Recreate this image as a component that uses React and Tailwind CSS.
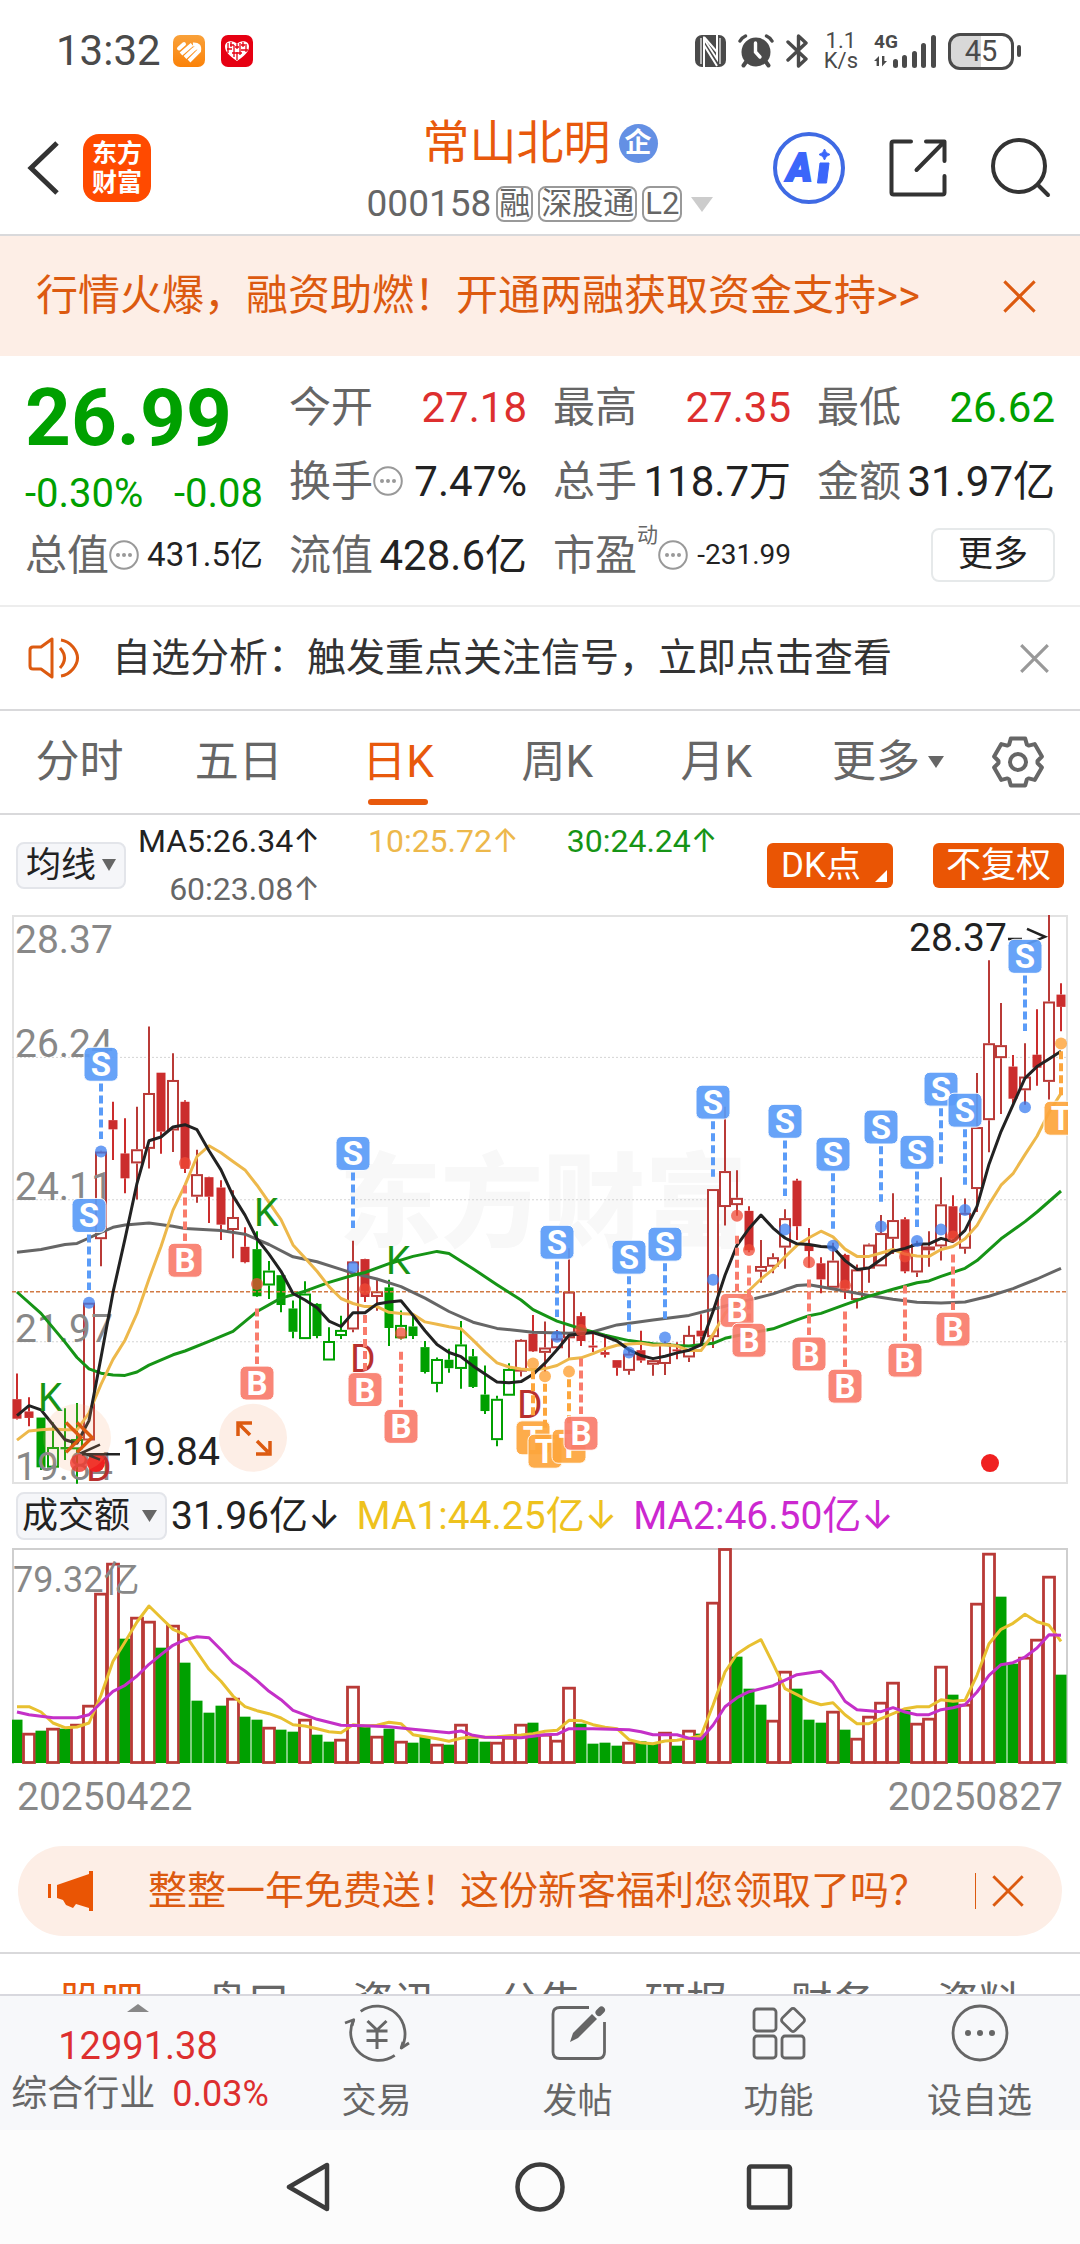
import React, { useState } from 'react'

const BLUE = '#5b9cf8'
const CORAL = '#f97c6c'
const AMBER = '#fda63c'
const RED = '#cb2d2d'
const HOLLOW = '#b93a37'
const GREEN = '#00a000'

// high, body top, body bottom, low, kind (r / g filled, R / G hollow)
// levels run from 44 (28.37) down to 1528 (19.84)
const CANDLES = [
    [1242, 1309, 1360, 1362, 'r'], [1304, 1341, 1358, 1380, 'r'], [1357, 1357, 1487, 1494, 'g'], [1370, 1434, 1488, 1490, 'G'],
    [1333, 1434, 1440, 1468, 'g'], [1319, 1413, 1440, 1530, 'G'], [1057, 1057, 1417, 1417, 'R'], [660, 662, 891, 962, 'R'],
    [532, 580, 604, 684, 'r'], [575, 667, 732, 771, 'r'], [545, 656, 693, 787, 'R'], [335, 509, 655, 706, 'R'],
    [456, 456, 610, 668, 'r'], [405, 475, 607, 663, 'R'], [528, 532, 707, 718, 'r'], [657, 721, 780, 796, 'R'],
    [728, 729, 780, 849, 'r'], [737, 756, 853, 893, 'r'], [763, 833, 867, 941, 'R'], [860, 911, 951, 954, 'r'],
    [870, 917, 1040, 1042, 'g'], [948, 973, 1012, 1047, 'G'], [985, 985, 1063, 1082, 'g'], [1051, 1072, 1133, 1150, 'g'],
    [1001, 1033, 1152, 1152, 'G'], [1058, 1060, 1144, 1150, 'g'], [1121, 1157, 1208, 1208, 'G'], [1091, 1128, 1144, 1152, 'G'],
    [895, 949, 1127, 1134, 'R'], [942, 943, 1042, 1055, 'r'], [996, 1027, 1042, 1078, 'R'], [997, 1017, 1123, 1170, 'g'],
    [1077, 1115, 1150, 1153, 'G'], [1090, 1119, 1144, 1152, 'g'], [1157, 1173, 1238, 1242, 'g'], [1200, 1204, 1269, 1291, 'G'],
    [1177, 1206, 1228, 1240, 'g'], [1105, 1166, 1230, 1282, 'G'], [1178, 1197, 1277, 1280, 'g'], [1221, 1297, 1340, 1348, 'g'],
    [1300, 1308, 1416, 1432, 'G'], [1215, 1230, 1300, 1300, 'G'], [1152, 1154, 1237, 1250, 'R'], [1089, 1138, 1184, 1186, 'r'],
    [1106, 1174, 1188, 1237, 'R'], [1128, 1150, 1176, 1180, 'R'], [915, 1028, 1150, 1205, 'R'], [1082, 1092, 1157, 1170, 'r'],
    [1138, 1169, 1174, 1186, 'r'], [1144, 1186, 1193, 1200, 'r'], [1207, 1207, 1227, 1248, 'r'], [1180, 1190, 1235, 1245, 'R'],
    [1130, 1181, 1208, 1214, 'r'], [1200, 1207, 1219, 1248, 'R'], [1158, 1162, 1217, 1246, 'R'], [1160, 1179, 1184, 1205, 'r'],
    [1117, 1141, 1200, 1212, 'R'], [1087, 1130, 1145, 1170, 'r'], [760, 760, 1147, 1175, 'R'], [545, 713, 807, 855, 'R'],
    [711, 783, 802, 830, 'R'], [805, 817, 920, 925, 'r'], [893, 961, 976, 1005, 'R'], [928, 938, 963, 980, 'R'],
    [813, 836, 913, 968, 'R'], [733, 738, 857, 893, 'r'], [862, 905, 922, 965, 'r'], [938, 954, 996, 1032, 'r'],
    [900, 947, 1018, 1018, 'R'], [929, 932, 1020, 1047, 'r'], [957, 970, 1050, 1072, 'R'], [902, 905, 968, 1005, 'R'],
    [828, 875, 962, 962, 'R'], [771, 841, 890, 930, 'R'], [834, 839, 975, 980, 'r'], [895, 903, 978, 990, 'R'],
    [870, 910, 920, 963, 'R'], [729, 800, 910, 947, 'R'], [776, 805, 890, 895, 'r'], [785, 822, 916, 929, 'R'],
    [457, 598, 760, 820, 'R'], [162, 379, 580, 664, 'R'], [274, 384, 418, 564, 'R'], [410, 440, 524, 535, 'r'],
    [379, 466, 502, 540, 'R'], [290, 409, 443, 490, 'r'], [44, 270, 480, 526, 'R'], [222, 252, 284, 348, 'r'],
]

const dense = (list) => list.map((v, i) => [i, v])

const MA5 = dense([
    1352, 1326, 1337, 1376, 1415, 1424, 1365, 1200, 1030, 890, 745, 634, 624, 598, 592, 605, 660, 710, 778, 828, 890, 930,
    975, 1033, 1050, 1070, 1105, 1119, 1083, 1083, 1060, 1055, 1052, 1090, 1130, 1166, 1187, 1198, 1222, 1243, 1264, 1266,
    1263, 1244, 1215, 1180, 1142, 1138, 1135, 1145, 1157, 1180, 1195, 1203, 1197, 1188, 1181, 1167, 1080, 985, 907, 863,
    828, 862, 888, 903, 905, 910, 912, 947, 970, 966, 944, 922, 915, 904, 903, 889, 897, 868, 805, 695, 610, 540, 470, 440,
    420, 400,
])
const MA10 = dense([
    1416, 1392, 1389, 1387, 1389, 1389, 1345, 1270, 1205, 1155, 1085, 995, 910, 815, 750, 675, 647, 665, 688, 710, 750, 795,
    840, 906, 940, 975, 1015, 1046, 1059, 1067, 1067, 1082, 1085, 1087, 1107, 1113, 1120, 1125, 1155, 1186, 1214, 1225, 1230,
    1233, 1229, 1221, 1204, 1201, 1190, 1177, 1168, 1165, 1163, 1168, 1167, 1170, 1182, 1182, 1140, 1085, 1053, 1025, 995,
    970, 937, 907, 887, 870, 885, 917, 936, 936, 927, 918, 930, 935, 936, 918, 910, 890, 855, 800, 750, 720, 670, 622, 560, 510,
])
const MA30 = [
    [0, 1029], [2, 1085], [4, 1160], [5, 1200], [6, 1230], [7, 1241], [8, 1246], [9, 1247], [10, 1238], [11, 1220], [13, 1193],
    [14, 1183], [16, 1158], [18, 1132], [20, 1080], [22, 1045], [24, 1027], [26, 1004], [28, 985], [29, 978], [31, 955],
    [33, 936], [35, 923], [36, 928], [38, 968], [40, 1010], [42, 1050], [43, 1075], [45, 1105], [47, 1125], [49, 1142],
    [51, 1156], [53, 1164], [55, 1169], [56, 1170], [58, 1163], [59, 1150], [61, 1137], [63, 1125], [65, 1102], [66, 1091],
    [67, 1085], [69, 1062], [71, 1040], [73, 1022], [75, 1005], [76, 1000], [77, 988], [79, 967], [80, 947], [82, 890],
    [84, 845], [85, 820], [87, 765],
]
const MA60 = [
    [0, 925], [2, 918], [4, 905], [5, 902], [6, 888], [7, 873], [8, 860], [9, 854], [11, 849], [13, 857], [14, 863], [17, 868],
    [19, 878], [21, 905], [23, 937], [25, 950], [27, 970], [28, 980], [30, 995], [32, 1015], [34, 1045], [36, 1080],
    [38, 1108], [40, 1124], [43, 1134], [46, 1137], [48, 1133], [50, 1115], [53, 1102], [56, 1090], [58, 1074], [61, 1050],
    [63, 1034], [65, 1012], [66, 1010], [69, 1026], [71, 1038], [73, 1048], [75, 1056], [77, 1058], [79, 1055], [81, 1040],
    [83, 1020], [85, 995], [87, 967],
]

// signal letter, day, badge level, dot level
const SIGNALS = [
    ['S', 6, 829, 1057], ['S', 7, 434, 662], ['B', 14, 946, 692], ['B', 20, 1267, 1008], ['S', 28, 667, 964],
    ['B', 29, 1284, 1022], ['B', 32, 1380, 1137], ['S', 45, 899, 1146], ['T', 43, 1410, 1216], ['T', 44, 1445, 1249],
    ['T', 46, 1432, 1237], ['B', 47, 1398, 1128], ['S', 51, 938, 1187], ['S', 54, 904, 1148], ['S', 58, 533, 997],
    ['B', 60, 1077, 830], ['B', 61, 1155, 919], ['S', 64, 583, 866], ['B', 66, 1191, 951], ['S', 68, 669, 908],
    ['B', 69, 1275, 1012], ['S', 72, 598, 858], ['B', 74, 1207, 936], ['S', 75, 664, 896], ['S', 77, 499, 866],
    ['B', 78, 1126, 884], ['S', 79, 554, 815], ['S', 84, 152, 546], ['T', 87, 575, 380],
]

// bar tops, 208 is 79.32亿 and 850 is zero
const VOLUME = [
    [723, 'g'], [762, 'r'], [756, 'g'], [747, 'r'], [750, 'g'], [735, 'r'], [678, 'r'], [342, 'r'], [252, 'r'], [480, 'g'],
    [414, 'r'], [426, 'r'], [507, 'g'], [438, 'r'], [552, 'g'], [666, 'g'], [702, 'g'], [681, 'g'], [657, 'r'], [714, 'g'],
    [723, 'g'], [744, 'r'], [753, 'g'], [759, 'g'], [720, 'r'], [768, 'g'], [789, 'g'], [780, 'r'], [621, 'r'], [741, 'g'],
    [771, 'r'], [750, 'g'], [786, 'r'], [792, 'g'], [774, 'g'], [795, 'r'], [798, 'g'], [735, 'r'], [780, 'g'], [789, 'g'],
    [789, 'r'], [774, 'r'], [735, 'r'], [732, 'g'], [765, 'r'], [783, 'r'], [624, 'r'], [735, 'g'], [795, 'g'], [792, 'g'],
    [801, 'g'], [789, 'r'], [788, 'g'], [795, 'g'], [759, 'r'], [801, 'g'], [753, 'r'], [765, 'g'], [369, 'r'], [208, 'r'],
    [534, 'g'], [630, 'g'], [678, 'g'], [723, 'r'], [576, 'r'], [630, 'g'], [723, 'g'], [732, 'g'], [696, 'r'], [753, 'g'],
    [777, 'r'], [711, 'r'], [669, 'r'], [609, 'r'], [694, 'g'], [732, 'r'], [717, 'r'], [561, 'r'], [648, 'g'], [675, 'r'],
    [372, 'r'], [222, 'r'], [354, 'g'], [555, 'g'], [534, 'r'], [480, 'r'], [291, 'r'], [588, 'g'],
]
const VMA1 = dense([
    684, 684, 700, 733, 747, 745, 733, 650, 548, 490, 430, 382, 417, 452, 468, 520, 572, 608, 652, 684, 696, 705, 718, 738,
    742, 750, 759, 762, 738, 742, 740, 731, 735, 768, 774, 780, 788, 779, 774, 776, 774, 771, 769, 765, 758, 755, 725, 726,
    738, 746, 750, 783, 792, 795, 787, 785, 779, 771, 680, 580, 526, 502, 483, 555, 630, 648, 667, 678, 672, 708, 735, 735,
    720, 705, 690, 684, 684, 663, 668, 665, 590, 495, 452, 434, 407, 429, 440, 488,
])
const VMA2 = [
    [0, 700], [1, 708], [3, 717], [5, 717], [6, 708], [7, 672], [8, 638], [9, 620], [10, 592], [11, 557], [12, 528], [13, 500],
    [14, 483], [15, 474], [16, 477], [17, 513], [18, 552], [19, 577], [20, 606], [21, 638], [22, 663], [23, 695], [25, 722],
    [27, 740], [29, 741], [31, 744], [33, 752], [36, 762], [37, 757], [38, 770], [39, 776], [42, 777], [44, 768], [45, 767],
    [46, 750], [48, 750], [51, 753], [52, 759], [53, 768], [55, 768], [56, 779], [57, 781], [58, 740], [59, 684], [60, 657],
    [61, 639], [63, 621], [65, 588], [67, 578], [68, 612], [69, 668], [70, 693], [72, 699], [73, 687], [74, 700], [75, 708],
    [76, 708], [77, 693], [78, 687], [79, 678], [80, 640], [81, 590], [82, 558], [83, 552], [84, 535], [85, 508], [86, 468],
    [87, 470],
]

const cx = (i) => 5 + i * 12
const py = (v) => ((v - 44) * 568) / 1484
const vy = (v) => (v - 208) / 3
const points = (list, y) => list.map(([i, v]) => `${cx(i)},${y(v).toFixed(1)}`).join(' ')

const Cross = ({ className, width = 2 }) => (
    <svg viewBox="0 0 24 24" className={className} fill="none" stroke="currentColor" strokeWidth={width}>
        <path d="M1 1 23 23M23 1 1 23" />
    </svg>
)

const Caret = ({ className }) => (
    <svg viewBox="0 0 12 10" preserveAspectRatio="none" className={className} fill="currentColor">
        <path d="M0 0H12L6 10Z" />
    </svg>
)

const MoreDots = () => (
    <svg viewBox="0 0 30 30" className="size-[30px] shrink-0 text-[#999]">
        <circle cx="15" cy="15" r="13.8" fill="none" stroke="currentColor" strokeWidth="2" />
        <circle cx="9" cy="15" r="2" fill="currentColor" />
        <circle cx="15" cy="15" r="2" fill="currentColor" />
        <circle cx="21" cy="15" r="2" fill="currentColor" />
    </svg>
)

const StatusBar = () => (
    <div className="flex h-[102px] items-center pl-[56px] pr-[59px] text-[#4a4a4a]">
        <span className="text-[42px] leading-none">13:32</span>
        <svg viewBox="0 0 32 32" className="ml-3 size-8">
            <defs>
                <linearGradient id="heartApp" x1="0" y1="0" x2="0" y2="1">
                    <stop offset="0" stopColor="#f9a13a" />
                    <stop offset="1" stopColor="#fb8208" />
                </linearGradient>
            </defs>
            <rect width="32" height="32" rx="7" fill="url(#heartApp)" />
            <g fill="none" stroke="#fff" strokeWidth="4">
                <path d="M6 13.500 11 9" strokeLinecap="round" />
                <path d="M8 19 19 9.500" />
                <path d="M12 22.500 20 15 24 12" />
                <path d="M16 26 26 16Q27.500 9 20 9.500" />
            </g>
        </svg>
        <svg viewBox="0 0 32 32" className="ml-4 size-8">
            <rect width="32" height="32" rx="7" fill="#e60012" />
            <path d="M16 26C9 21 4 17 4 11.500 4 6 12 4.500 16 9 20 4.500 28 6 28 11.500 28 17 23 21 16 26Z" fill="#fff" />
            <path d="M7 8V18M10 7V12M13 10V22M16 9V14M19 8V20M22 7V12M25 9V17M6 14H11M11 18H21M14 12H18M20 15H27M9 10H13M16 17V25M20 10H24" stroke="#e60012" strokeWidth="1.300" />
        </svg>
        <div className="ml-auto flex items-center gap-3">
            <svg viewBox="0 0 31 32" className="h-8 w-[31px]">
                <rect width="31" height="32" rx="7" fill="currentColor" />
                <path d="M9 32V4L22 24V0" fill="none" stroke="#fff" strokeWidth="2" />
                <path d="M9 10 22 31M9 2 22 17" fill="none" stroke="#fff" strokeWidth="2" />
                <path d="M6 3V29M25 3V29" stroke="#fff" strokeWidth="1.200" />
            </svg>
            <svg viewBox="0 0 36 34" className="h-[34px] w-9" fill="none" stroke="currentColor" strokeLinecap="round">
                <circle cx="18" cy="18" r="14.500" fill="currentColor" stroke="none" />
                <path d="M2 7Q4 3.500 7.500 2M34 7Q32 3.500 28.500 2" strokeWidth="3.400" />
                <path d="M8 28 5.500 31.500M28 28 30.500 31.500" strokeWidth="4" />
                <path d="M17.500 9V18L22 23" stroke="#fff" strokeWidth="3.400" />
            </svg>
            <svg viewBox="0 0 22 34" className="h-[34px] w-[22px]" fill="none" stroke="currentColor" strokeWidth="3.400" strokeLinejoin="round" strokeLinecap="round">
                <path d="M2 8 20 25 12.500 32V2L20 9 2 26" />
            </svg>
            <span className="px-1 text-center text-[22px] leading-[20px]">1.1<br />K/s</span>
            <div className="relative w-[62px]">
                <span className="absolute left-0 -top-px text-[19px] font-bold leading-none">4G</span>
                <svg viewBox="0 0 62 36" className="h-9 w-full" fill="currentColor">
                    <path d="M0 28 5 23V33H2.600V28ZM13 28 8 33.500V23H10.400V28Z" />
                    <rect x="19" y="26" width="5" height="9" rx="2.500" />
                    <rect x="28" y="22" width="5" height="13" rx="2.500" />
                    <rect x="38" y="18" width="5" height="17" rx="2.500" />
                    <rect x="47" y="10" width="5" height="25" rx="2.500" />
                    <rect x="57" y="2" width="5" height="33" rx="2.500" />
                </svg>
            </div>
            <div className="flex items-center gap-[3px]">
                <span className="flex h-[37px] w-[66px] items-center justify-center rounded-xl border-[3px] border-[#4a4a4a] bg-linear-to-r from-[#d8d8d8] from-50% to-white to-50% text-[29px] leading-none">45</span>
                <i className="h-3 w-1 rounded-full bg-[#4a4a4a]" />
            </div>
        </div>
    </div>
)

const Tag = ({ children }) => (
    <span className="rounded-lg border-2 border-[#999] px-px text-[31px] leading-[32px]">{children}</span>
)

const Header = () => (
    <header className="grid grid-cols-[1fr_auto_1fr] items-center border-b-2 border-[#d9d9db] px-[27px]">
        <div className="flex items-center gap-6">
            <button aria-label="返回">
                <svg viewBox="0 0 32 54" className="h-[54px] w-8" fill="none" stroke="#333" strokeWidth="5">
                    <path d="M30 2 4 27 30 52" />
                </svg>
            </button>
            <a href="#home" className="grid size-[68px] place-content-center rounded-2xl bg-[#ff4a00] text-center text-[25px] font-bold leading-[29px] text-white">
                东方<br />财富
            </a>
        </div>
        <div className="flex flex-col items-center">
            <h1 className="flex items-center gap-2 text-[47px] leading-[82px] text-[#e8590c]">
                常山北明
                <span className="grid size-[39px] place-content-center rounded-full bg-[#6490e4] text-[27px] font-bold leading-none text-white">企</span>
            </h1>
            <button className="flex items-center gap-[5px] pb-[10px] text-[37px] leading-[40px] text-[#666]">
                000158
                <Tag>融</Tag>
                <Tag>深股通</Tag>
                <Tag>L2</Tag>
                <Caret className="ml-1 h-[15px] w-[22px] text-[#ccc]" />
            </button>
        </div>
        <div className="flex items-center justify-end gap-11 pr-[2px]">
            <button aria-label="AI">
                <svg viewBox="0 0 72 72" className="size-[72px]">
                    <circle cx="36" cy="36" r="34" fill="none" stroke="#3f6ae4" strokeWidth="4" />
                    <text x="14" y="49" fontSize="38" fontWeight="900" fontStyle="italic" fill="#3b66fa" stroke="#3b66fa" strokeWidth="2">A</text>
                    <path d="M47 31H56L53.500 51H44.500Z" fill="#3b66fa" stroke="#3b66fa" strokeLinejoin="round" />
                    <path d="M51.500 17Q52.500 21.500 57 22.500 52.500 23.500 51.500 28 50.500 23.500 46 22.500 50.500 21.500 51.500 17Z" fill="#3b66fa" stroke="#3b66fa" />
                </svg>
            </button>
            <button aria-label="分享">
                <svg viewBox="0 0 58 58" className="size-[58px]" fill="none" stroke="#333" strokeWidth="4" strokeLinecap="round" strokeLinejoin="round">
                    <path d="M22 2.500H4.500Q2.500 2.500 2.500 4.500V53.500Q2.500 55.500 4.500 55.500H53.500Q55.500 55.500 55.500 53.500V37" />
                    <path d="M37 2.500H55.500V22M55 3 27.500 31" />
                </svg>
            </button>
            <button aria-label="搜索">
                <svg viewBox="0 0 60 60" className="size-[60px]" fill="none" stroke="#333" strokeWidth="4" strokeLinecap="round">
                    <circle cx="28" cy="28" r="26" />
                    <path d="M47 47 57 57" />
                </svg>
            </button>
        </div>
    </header>
)

const Field = ({ label, value, tone = 'text-[#222]', size = 'text-[42px]', more, sup }) => (
    <div className="flex items-center whitespace-nowrap">
        <span className="text-[42px] text-[#666]">{label}</span>
        {sup && <sup className="-top-5 text-[21px] text-[#666]">{sup}</sup>}
        {more && <MoreDots />}
        <span className={`ml-auto ${tone} ${size}`}>{value}</span>
    </div>
)

const Quote = () => (
    <section className="grid auto-rows-[74px] grid-cols-4 gap-x-[26px] border-b-2 border-[#ededed] px-[25px] pb-[13px] pt-[14px]">
        <div className="row-span-2 flex flex-col justify-center pt-3 text-[#00a000]">
            <strong className="text-[80px] font-bold leading-[80px]">26.99</strong>
            <div className="flex justify-between pt-2 text-[40px] leading-[56px]">
                <span>-0.30%</span>
                <span>-0.08</span>
            </div>
        </div>
        <Field label="今开" value="27.18" tone="text-[#dd2f2f]" />
        <Field label="最高" value="27.35" tone="text-[#dd2f2f]" />
        <Field label="最低" value="26.62" tone="text-[#00a000]" />
        <Field label="换手" value="7.47%" more />
        <Field label="总手" value="118.7万" />
        <Field label="金额" value="31.97亿" />
        <Field label="总值" value="431.5亿" size="text-[33px]" more />
        <Field label="流值" value="428.6亿" />
        <Field label="市盈" value="-231.99" size="text-[28px]" sup="动" more />
        <button className="self-center justify-self-end rounded-lg border-2 border-[#e6e9ea] px-[25px] text-[35px] leading-[50px] text-[#222]">更多</button>
    </section>
)

const Notice = () => (
    <section className="flex items-center border-b-2 border-[#d9d9db] px-7 text-[39px] leading-[102px] text-[#333]">
        <svg viewBox="0 0 52 42" className="mr-8 h-[42px] w-[52px]" fill="none" stroke="#dc5a10" strokeWidth="3" strokeLinejoin="round">
            <path d="M24 2V40L13 32H5Q2 32 2 29V13Q2 10 5 10H13Z" />
            <path d="M32 11Q41 21 32 31M33 3Q40 4 45 10 54 21 45 32 40 38 33 39" />
        </svg>
        <a href="#analysis">自选分析：触发重点关注信号，立即点击查看</a>
        <button aria-label="关闭提示" className="ml-auto mr-[3px]"><Cross className="size-[29px] text-[#999]" width={2.6} /></button>
    </section>
)

const gearPath = () => {
    const pts = []
    for (let k = 0; k < 6; k++) {
        for (const [d, r] of [[-27, 19.5], [-17, 24.5], [17, 24.5], [27, 19.5]]) {
            const a = ((k * 60 - 90 + d) * Math.PI) / 180
            pts.push(`${(27 + r * Math.cos(a)).toFixed(1)} ${(27 + r * Math.sin(a)).toFixed(1)}`)
        }
    }
    return `M${pts.join('L')}Z`
}

const PERIODS = ['分时', '五日', '日K', '周K', '月K']

const Periods = () => {
    const [active, setActive] = useState('日K')
    return (
        <nav className="grid grid-cols-[repeat(5,1fr)_182px_80px] border-b-2 border-[#d9d9db] pr-[22px] text-[44px] leading-[102px] text-[#666]">
            {PERIODS.map((p) => (
                <button key={p} onClick={() => setActive(p)} className={`relative ${p === active ? 'text-[#e8590c]' : ''}`}>
                    {p}
                    {p === active && <i className="absolute bottom-2 left-1/2 h-[6px] w-[60px] -translate-x-1/2 rounded-full bg-[#e8590c]" />}
                </button>
            ))}
            <button className="flex items-center justify-center gap-2 pl-[2px]">
                更多
                <Caret className="h-3 w-4" />
            </button>
            <button aria-label="设置" className="grid place-content-center">
                <svg viewBox="0 0 54 54" className="size-[54px]" fill="none" stroke="currentColor" strokeWidth="4" strokeLinejoin="round">
                    <path d={gearPath()} />
                    <circle cx="27" cy="27" r="8" />
                </svg>
            </button>
        </nav>
    )
}

const Averages = () => (
    <div className="flex items-center px-4 text-[32px]">
        <button className="flex items-center gap-[6px] rounded-lg border-2 border-[#e3e5ea] bg-[#f5f6f9] px-2 text-[35px] leading-[43px] text-[#222]">
            均线
            <Caret className="h-3 w-[14px] text-[#666]" />
        </button>
        <div className="mr-auto grid grid-cols-[auto_auto_auto] justify-items-end gap-x-12 py-[2px] pl-3 leading-[48px]">
            <span className="text-[#222]">MA5:26.34↑</span>
            <span className="text-[#edb84b]">10:25.72↑</span>
            <span className="text-[#169416]">30:24.24↑</span>
            <span className="text-[#666]">60:23.08↑</span>
        </div>
        <button className="relative rounded-md bg-[#ea5504] pl-[14px] pr-8 text-[35px] leading-[45px] text-white">
            DK点
            <i className="absolute bottom-[6px] right-[6px] border-b-[12px] border-l-[12px] border-b-white border-l-transparent" />
        </button>
        <button className="ml-10 rounded-md bg-[#ea5504] px-[13px] text-[35px] leading-[45px] text-white">不复权</button>
    </div>
)

const Candle = ({ i, data }) => {
    const [high, top, bottom, low, kind] = data
    const hollow = kind === 'R' || kind === 'G'
    const green = kind === 'g' || kind === 'G'
    const color = green ? GREEN : hollow ? HOLLOW : RED
    return (
        <g stroke={color} strokeWidth="2">
            <path d={`M${cx(i)} ${py(high)}V${py(top)}M${cx(i)} ${py(bottom)}V${py(low)}`} />
            {hollow ? (
                <rect x={cx(i) - 5} y={py(top) + 1} width="10" height={Math.max(py(bottom) - py(top) - 2, 1)} fill="#fff" />
            ) : (
                <rect x={cx(i) - 4.5} y={py(top)} width="9" height={py(bottom) - py(top)} fill={color} stroke="none" />
            )}
        </g>
    )
}

const Signal = ({ data }) => {
    const [letter, i, at, dot] = data
    const color = { S: BLUE, B: CORAL, T: AMBER }[letter]
    const line = { S: [at + 50, at + 195], B: [at - 195, at - 50], T: [dot + 20, at - 50] }[letter]
    const dotColor = { S: '#3b7df0', B: '#f04a35', T: '#fd9b28' }[letter]
    return (
        <g>
            <path d={`M${cx(i)} ${py(line[0])}V${py(line[1])}`} stroke={color} strokeWidth="4" strokeDasharray="8 4" />
            <circle cx={cx(i)} cy={py(dot)} r="6" fill={dotColor} opacity="0.75" />
            <rect x={cx(i) - 17} y={py(at) - 17} width="34" height="34" rx="6" fill={color} opacity="0.92" stroke="#fff" strokeWidth="1" />
            <text x={cx(i)} y={py(at) + 12} textAnchor="middle" fontSize="33" fontWeight="700" fill="#fff">{letter}</text>
        </g>
    )
}

const PriceChart = () => (
    <svg viewBox="0 0 1056 569" className="block w-full overflow-hidden" role="img" aria-label="日K线">
        <text x="327" y="324" fontSize="102" fontWeight="900" fill="#f8f8f8">东方财富</text>
        <rect x="1" y="1" width="1054" height="567" fill="none" stroke="#e2e2e2" strokeWidth="2" />
        {[416, 788, 1159].map((v) => (
            <path key={v} d={`M0 ${py(v)}H1056`} stroke="#d4d4d4" strokeDasharray="2 2" />
        ))}
        {CANDLES.map((c, i) => <Candle key={i} i={i} data={c} />)}
        <path d={`M0 ${py(1028)}H1056`} stroke="#d27a45" strokeWidth="1.500" strokeDasharray="4 2" />
        <g fontSize="39" fill="#888">
            <text x="3" y={py(144)}>28.37</text>
            <text x="3" y={py(414)}>26.24</text>
            <text x="3" y={py(788)}>24.11</text>
            <text x="3" y={py(1159)}>21.97</text>
            <text x="3" y={py(1521)}>19.84</text>
        </g>
        <g fill="none" strokeWidth="3" strokeLinejoin="round">
            <polyline points={points(MA60, py)} stroke="#666" />
            <polyline points={points(MA30, py)} stroke="#169416" />
            <polyline points={points(MA10, py)} stroke="#edb84b" />
            <polyline points={points(MA5, py)} stroke="#222" />
        </g>
        <g fontSize="39" fill="#169416">
            <text x="26" y={py(1340)}>K</text>
            <text x="242" y={py(857)}>K</text>
            <text x="374" y={py(982)}>K</text>
        </g>
        <g fontSize="39" fill="#b8302e">
            <text x="74" y={py(1522)}>D</text>
            <text x="338" y={py(1237)}>D</text>
            <text x="505" y={py(1357)}>D</text>
        </g>
        <circle cx="67" cy={py(1476)} r="9" fill="#f02020" opacity="0.8" />
        <circle cx="84" cy={py(1476)} r="9" fill="#f02020" />
        <circle cx="978" cy={py(1476)} r="9" fill="#f02020" />
        <g fontSize="39" fill="#222">
            <text x="110" y={py(1482)}>19.84</text>
            <text x="897" y={py(137)}>28.37</text>
        </g>
        <path d={`M108 ${py(1453)}H70M88 ${py(1428)}L70 ${py(1449)} 88 ${py(1467)}`} fill="none" stroke="#222" strokeWidth="2.500" />
        <path d={`M996 ${py(107)}H1010M1015 ${py(80)}L1033 ${py(101)} 1015 ${py(120)}`} fill="none" stroke="#222" strokeWidth="2.500" />
        {SIGNALS.map((s, k) => <Signal key={k} data={s} />)}
        <circle cx="65" cy={py(1410)} r="34" fill="#f9a56f" opacity="0.17" />
        <circle cx="241" cy={py(1410)} r="34" fill="#fdeee6" />
        <g fill="none" stroke="#dc5a10" strokeWidth="3.500">
            <path d={`M54 ${py(1370)}L69 ${py(1409)} 54 ${py(1448)}M65 ${py(1370)}L80 ${py(1409)} 65 ${py(1448)}`} />
            <path d="M226 521V508H240M228 510 238 520M258 526V539H244M256 537 245 526" />
        </g>
    </svg>
)

const VolumeChart = () => (
    <svg viewBox="0 0 1056 216" className="block w-full" role="img" aria-label="成交额">
        <path d="M1 216V1H1055V216" fill="none" stroke="#cfcfcf" strokeWidth="2" />
        {VOLUME.map(([v, kind], i) => (
            kind === 'g'
                ? <rect key={i} x={cx(i) - 5.5} y={vy(v)} width="11" height={215 - vy(v)} fill={GREEN} />
                : <rect key={i} x={cx(i) - 5.5} y={vy(v) + 1.5} width="11" height={213 - vy(v)} fill="#fff" stroke={HOLLOW} strokeWidth="2.800" />
        ))}
        <text x="1" y="44" fontSize="36" fill="#888">79.32亿</text>
        <g fill="none" strokeWidth="3" strokeLinejoin="round">
            <polyline points={points(VMA1, vy)} stroke="#e8c030" />
            <polyline points={points(VMA2, vy)} stroke="#c430c8" />
        </g>
    </svg>
)

const Promo = () => (
    <div className="mx-[18px] mb-4 flex items-center rounded-full bg-[#fdeee6] pl-[30px] pr-[38px] text-[39px] leading-[90px] text-[#dc5a10]">
        <svg viewBox="0 0 46 40" className="mr-[54px] h-10 w-[46px]" fill="#ea5504">
            <path d="M0 13H3V27H0ZM9 14 41 3V0H45V40H41V37L28 33 25 37 18 34 15 29 9 27Z" />
        </svg>
        <a href="#gift">整整一年免费送！这份新客福利您领取了吗？</a>
        <i className="ml-auto mr-4 h-9 w-px bg-[#dc5a10]" />
        <button aria-label="关闭活动"><Cross className="size-8 text-[#dc5a10]" width={2.2} /></button>
    </div>
)

const SECTIONS = ['股吧', '盘口', '资讯', '公告', '研报', '财务', '资料']

const navIcons = {
    trade: (
        <g fill="none" stroke="currentColor" strokeWidth="2.800">
            <path d="M15.700 7.300A28 28 0 0 1 56.300 44M8.700 15.700A28 28 0 0 0 49.700 51.300" />
            <path d="M0 19 8.700 15.700 7 22M58 38 56.300 44 64 39" strokeLinejoin="round" />
            <path d="M22.500 17 32 26 41.500 17M21.500 27H42.500M21.500 36.500H42.500M32 26V45" strokeWidth="3" />
        </g>
    ),
    post: (
        <g fill="none" stroke="currentColor" strokeWidth="2.800">
            <path d="M43 3.500H14Q7 3.500 7 10V48Q7 54.500 14 54.500H52Q58.500 54.500 58.500 48V18" />
            <path d="M55.500 6 53 8.500" strokeWidth="7" strokeLinecap="round" />
            <path d="M24 38 27 29 46 10 51 15 32 34Z" fill="currentColor" stroke="none" />
        </g>
    ),
    tools: (
        <g fill="none" stroke="currentColor" strokeWidth="2.800">
            <rect x="7" y="5" width="22" height="22" rx="3" />
            <rect x="7" y="32" width="22" height="22" rx="3" />
            <rect x="35" y="32" width="22" height="22" rx="3" />
            <rect x="37" y="7" width="18" height="18" rx="3" transform="rotate(45 46 16)" />
        </g>
    ),
    pick: (
        <g fill="currentColor">
            <circle cx="32" cy="29" r="27" fill="none" stroke="currentColor" strokeWidth="2.800" />
            <circle cx="20" cy="29" r="3" />
            <circle cx="32" cy="29" r="3" />
            <circle cx="44" cy="29" r="3" />
        </g>
    ),
}

const ACTIONS = [['trade', '交易'], ['post', '发帖'], ['tools', '功能'], ['pick', '设自选']]

const BottomBar = () => (
    <nav className="grid grid-cols-[276px_repeat(4,1fr)] border-t-2 border-[#d8d8de] bg-[#f7f8fa] pb-1 pt-2 text-[#666]">
        <button className="flex flex-col items-center">
            <Caret className="h-2 w-[22px] rotate-180 text-[#888]" />
            <span className="pt-[10px] text-[38px] leading-[48px] text-[#dd2f2f]">12991.38</span>
            <span className="whitespace-nowrap pl-1 text-[36px] leading-[48px]">综合行业 <b className="pl-2 font-normal text-[#dd2f2f]">0.03%</b></span>
        </button>
        {ACTIONS.map(([icon, label]) => (
            <button key={icon} className="flex flex-col items-center gap-4 text-[35px] leading-[48px]">
                <svg viewBox="0 0 64 58" className="h-[58px] w-16 overflow-visible">{navIcons[icon]}</svg>
                {label}
            </button>
        ))}
    </nav>
)

const SystemBar = () => (
    <div className="grid grid-cols-3 place-items-center bg-[#fcfcfc] px-[194px] py-8 text-[#3c3c3c]">
        <button aria-label="后退">
            <svg viewBox="0 0 50 50" className="block size-[50px]" fill="none" stroke="currentColor" strokeWidth="4.500" strokeLinejoin="round">
                <path d="M43 3V47L5 25Z" />
            </svg>
        </button>
        <button aria-label="主屏幕">
            <svg viewBox="0 0 50 50" className="block size-[50px]" fill="none" stroke="currentColor" strokeWidth="4.500">
                <circle cx="25" cy="25" r="22.500" />
            </svg>
        </button>
        <button aria-label="最近任务">
            <svg viewBox="0 0 50 50" className="block size-[50px]" fill="none" stroke="currentColor" strokeWidth="4.500">
                <rect x="3" y="4.500" width="41" height="41" rx="2" />
            </svg>
        </button>
    </div>
)

const App = () => {
    const [bannerOpen, setBannerOpen] = useState(true)

    return (
        <div className="flex h-screen flex-col bg-white font-[Roboto,Inter,'Noto_Sans_CJK_SC',sans-serif]">
            <StatusBar />
            <Header />
            <main className="min-h-0 flex-1 overflow-hidden">
                {bannerOpen && (
                    <div className="flex items-center justify-between bg-[#fdeee6] pl-9 pr-11 text-[42px] leading-[120px] text-[#dc5a10]">
                        <a href="#margin">行情火爆，融资助燃！开通两融获取资金支持&gt;&gt;</a>
                        <button aria-label="关闭横幅" onClick={() => setBannerOpen(false)}><Cross className="size-[33px]" width={2.2} /></button>
                    </div>
                )}
                <Quote />
                <Notice />
                <Periods />
                <Averages />
                <div className="mx-3">
                    <PriceChart />
                    <div className="flex items-center whitespace-nowrap px-1 py-2 text-[39px] leading-[48px] text-[#222]">
                        <button className="flex items-center gap-3 rounded-lg border-2 border-[#e3e5ea] bg-[#f5f6f9] pl-1 pr-2 text-[36px] leading-[44px]">
                            成交额
                            <Caret className="h-3 w-[15px] text-[#666]" />
                        </button>
                        <span className="pl-1">31.96亿↓</span>
                        <span className="pl-4 text-[#eec21e]">MA1:44.25亿↓</span>
                        <span className="pl-4 text-[#cc28d0]">MA2:46.50亿↓</span>
                    </div>
                    <VolumeChart />
                    <div className="flex justify-between px-[5px] pb-4 text-[39px] leading-[66px] text-[#888]">
                        <time>20250422</time>
                        <time>20250827</time>
                    </div>
                </div>
                <Promo />
                <nav className="grid grid-cols-7 border-t-2 border-[#d9d9db] px-7 pt-7 text-[42px] leading-[42px] text-[#666]">
                    {SECTIONS.map((s, i) => (
                        <a key={s} href={`#tab${i}`} className={`text-center ${i === 0 ? 'text-[#e8590c]' : ''}`}>{s}</a>
                    ))}
                </nav>
            </main>
            <BottomBar />
            <SystemBar />
        </div>
    )
}

export default App
